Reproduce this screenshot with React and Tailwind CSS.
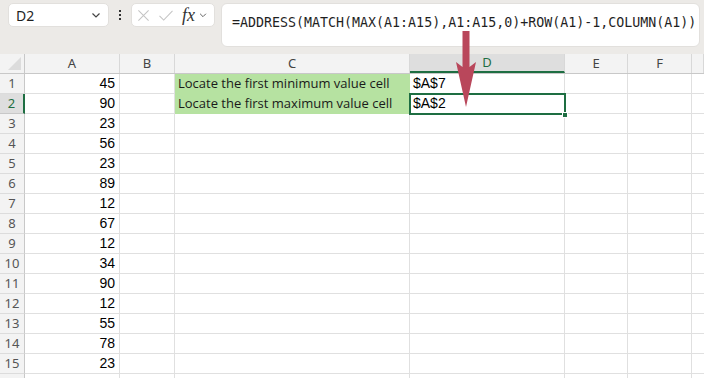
import React from 'react'

const cols = [
  { key: 'A', w: 'w-[95px]' },
  { key: 'B', w: 'w-[55px]' },
  { key: 'C', w: 'w-[235px]' },
  { key: 'D', w: 'w-[155px]' },
  { key: 'E', w: 'w-[63px]' },
  { key: 'F', w: 'w-[64px]' },
  { key: '', w: 'flex-1' },
]

const values = [45, 90, 23, 56, 23, 89, 12, 67, 12, 34, 90, 12, 55, 78, 23]

const Chevron = ({ className }) => (
  <svg className={className} viewBox="0 0 12 12" fill="none" stroke="currentColor" strokeWidth="1.2">
    <path d="M2.5 4.5 L6 8 L9.5 4.5" />
  </svg>
)

const TopBar = () => (
  <div className="h-[54px] bg-[#eceae7] relative flex items-start pt-[3px] pl-[8px] gap-0">
    <div className="w-[101px] h-[24px] bg-white rounded-[5px] border border-[#e2e0dd] flex items-center pl-[7px] pr-[6px] justify-between">
      <span className="text-[14px] text-[#1f1f1f]" style={{ fontFamily: '"Noto Sans", sans-serif' }}>D2</span>
      <Chevron className="w-[12px] h-[12px] text-[#444]" />
    </div>
    <div className="w-[22px] h-[24px] flex flex-col items-center justify-center gap-[2px]">
      <span className="w-[2px] h-[2px] bg-[#333]" />
      <span className="w-[2px] h-[2px] bg-[#333]" />
      <span className="w-[2px] h-[2px] bg-[#333]" />
    </div>
    <div className="w-[84px] h-[24px] bg-white rounded-[5px] border border-[#e2e0dd] flex items-center pl-[5px] gap-[8px]">
      <svg className="w-[13px] h-[13px] text-[#c4c4c4]" viewBox="0 0 14 14" fill="none" stroke="currentColor" strokeWidth="1.1">
        <path d="M1.5 1.5 L12.5 12.5 M12.5 1.5 L1.5 12.5" />
      </svg>
      <svg className="w-[16px] h-[13px] text-[#c4c4c4]" viewBox="0 0 16 14" fill="none" stroke="currentColor" strokeWidth="1.1">
        <path d="M1 7.5 L5.5 12 L15 2" />
      </svg>
      <div className="flex items-center gap-[3px]">
        <span className="text-[18px] italic text-[#333] leading-none" style={{ fontFamily: '"Liberation Serif", serif' }}>fx</span>
        <Chevron className="w-[10px] h-[10px] text-[#666]" />
      </div>
    </div>
    <div className="ml-[6px] w-[479px] h-[44px] bg-white rounded-[6px] border border-[#e2e0dd] pl-[10px] pt-[5px]">
      <span className="text-[13.3px] text-[#1f1f1f]" style={{ fontFamily: '"DejaVu Sans Mono", monospace' }}>
        =ADDRESS(MATCH(MAX(A1:A15),A1:A15,0)+ROW(A1)-1,COLUMN(A1))
      </span>
    </div>
  </div>
)

const HeaderRow = () => (
  <div className="flex h-[20px] bg-[#f3f3f3] border-b border-[#c8c8c8]">
    <div className="w-[25px] h-full border-r border-[#c8c8c8] relative">
      <div className="absolute right-[3px] bottom-[3px] w-0 h-0 border-l-[13px] border-l-transparent border-b-[13px] border-b-[#dcdcdc]" />
    </div>
    {cols.map((c) => (
      <div
        key={c.key || 'g'}
        className={`${c.w} h-full border-r border-[#d8d8d8] flex items-center justify-center text-[13px] ${
          c.key === 'D' ? 'bg-[#dedede] text-[#1e6e42] border-b-2 border-b-[#1e6e42]' : 'text-[#444]'
        }`}
        style={{ fontFamily: '"Noto Sans", sans-serif' }}
      >
        {c.key}
      </div>
    ))}
  </div>
)

const cText = ['Locate the first minimum value cell', 'Locate the first maximum value cell']
const dText = ['$A$7', '$A$2']

const Row = ({ i, v }) => (
  <div className="flex h-[20px]">
    <div
      className={`w-[25px] h-full border-b flex items-center justify-center text-[13px] ${
        i === 1 ? 'bg-[#dedede] text-[#1e6e42] border-r-2 border-r-[#1e6e42] border-b-[#c8c8c8]' : 'bg-[#f3f3f3] text-[#555] border-r border-r-[#c8c8c8] border-b-[#dcdcdc]'
      }`}
      style={{ fontFamily: '"Noto Sans", sans-serif' }}
    >
      {i + 1}
    </div>
    <div className="w-[95px] h-full border-r border-b border-[#e0e0e0] flex items-center justify-end pr-[4px] text-[14px] text-black" style={{ fontFamily: '"Liberation Sans", sans-serif' }}>
      {v}
    </div>
    <div className="w-[55px] h-full border-r border-b border-[#e0e0e0]" />
    <div
      className={`w-[235px] h-full border-r border-b flex items-center pl-[3px] text-[13px] text-[#1a1a1a] ${
        i < 2 ? 'bg-[#b6e2a1] border-[#b6e2a1]' : 'border-[#e0e0e0]'
      }`}
      style={{ fontFamily: '"Open Sans", sans-serif' }}
    >
      {cText[i]}
    </div>
    <div className="w-[155px] h-full border-r border-b border-[#e0e0e0] flex items-center pl-[3px] text-[14px] text-black" style={{ fontFamily: '"Liberation Sans", sans-serif' }}>
      {dText[i]}
    </div>
    <div className="w-[63px] h-full border-r border-b border-[#e0e0e0]" />
    <div className="w-[64px] h-full border-r border-b border-[#e0e0e0]" />
    <div className="flex-1 h-full border-b border-[#e0e0e0]" />
  </div>
)

export default function App() {
  return (
    <div className="w-[704px] h-[378px] bg-white overflow-hidden relative">
      <TopBar />
      <HeaderRow />
      {values.map((v, i) => (
        <Row key={i} i={i} v={v} />
      ))}
      <div className="flex h-[10px]">
        <div className="w-[25px] h-full bg-[#f3f3f3] border-r border-[#c8c8c8]" />
        <div className="w-[95px] h-full border-r border-[#e0e0e0]" />
        <div className="w-[55px] h-full border-r border-[#e0e0e0]" />
        <div className="w-[235px] h-full border-r border-[#e0e0e0]" />
        <div className="w-[155px] h-full border-r border-[#e0e0e0]" />
        <div className="w-[63px] h-full border-r border-[#e0e0e0]" />
        <div className="w-[64px] h-full border-r border-[#e0e0e0]" />
      </div>
      {/* selected cell D2 */}
      <div className="absolute left-[409px] top-[93px] w-[157px] h-[22px] border-2 border-[#1e6e42] pointer-events-none" />
      <div className="absolute left-[562px] top-[112px] w-[6px] h-[6px] bg-[#1e6e42] border border-white" />
      {/* arrow */}
      <svg className="absolute left-[454px] top-[31px]" width="24" height="78" viewBox="0 0 24 78">
        <path d="M8.5 0 H15.5 V36 L22 31 L12 76 L2 31 L8.5 36 Z" fill="#b9475b" />
      </svg>
    </div>
  )
}
